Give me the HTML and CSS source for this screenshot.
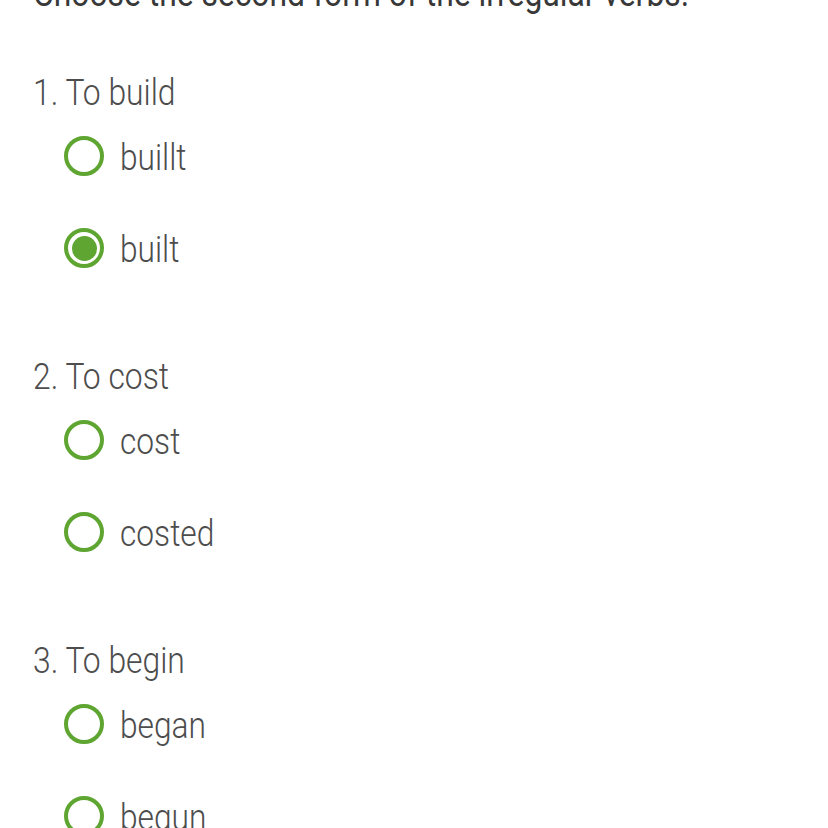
FILE: index.html
```html
<!DOCTYPE html>
<html>
<head>
<meta charset="utf-8">
<link rel="stylesheet" href="styles.css">
</head>
<body>
<div class="quiz">
  <h1 class="title"><span class="narrow">Choose the second form of the irregular verbs.</span></h1>
  <div class="question">
    <div class="q-text"><span class="narrow">1. To build</span></div>
    <label class="option"><span class="radio"></span><span class="opt-text narrow">buillt</span></label>
    <label class="option"><span class="radio checked"></span><span class="opt-text narrow">built</span></label>
  </div>
  <div class="question">
    <div class="q-text"><span class="narrow">2. To cost</span></div>
    <label class="option"><span class="radio"></span><span class="opt-text narrow">cost</span></label>
    <label class="option"><span class="radio"></span><span class="opt-text narrow">costed</span></label>
  </div>
  <div class="question">
    <div class="q-text"><span class="narrow">3. To begin</span></div>
    <label class="option"><span class="radio"></span><span class="opt-text narrow">began</span></label>
    <label class="option"><span class="radio"></span><span class="opt-text narrow">begun</span></label>
  </div>
</div>
</body>
</html>
```
FILE: styles.css
```css
html, body {
  margin: 0;
  padding: 0;
  background: #ffffff;
  overflow: hidden;
}
.quiz {
  padding: 0 33px;
  font-family: Roboto, "Noto Sans", sans-serif;
  color: #4d4d4d;
}
.narrow {
  display: inline-block;
  transform-origin: left center;
  white-space: nowrap;
}
.title {
  margin: -26px 0 0;
  font-size: 37px;
  font-weight: 400;
  line-height: 40px;
  color: #383838;
  white-space: nowrap;
}
.title .narrow {
  transform: scaleX(0.86);
}
.question {
  display: flex;
  flex-direction: column;
  margin-top: 59px;
}
.question + .question {
  margin-top: 63px;
}
.q-text {
  font-size: 37px;
  font-weight: 300;
  line-height: 40px;
  margin-bottom: -3px;
}
.q-text .narrow {
  transform: scaleX(0.86);
}
.option {
  display: flex;
  align-items: center;
  gap: 16px;
  height: 92px;
  padding-left: 31px;
}
.radio {
  box-sizing: border-box;
  width: 40px;
  height: 40px;
  border: 4px solid #5ea532;
  border-radius: 50%;
  display: flex;
  align-items: center;
  justify-content: center;
  flex: none;
}
.radio.checked::after {
  content: "";
  width: 25px;
  height: 25px;
  border-radius: 50%;
  background: #5ea532;
}
.opt-text {
  font-size: 36px;
  font-weight: 300;
  line-height: 40px;
  margin-top: 4px;
  transform: scaleX(0.88);
}
```
